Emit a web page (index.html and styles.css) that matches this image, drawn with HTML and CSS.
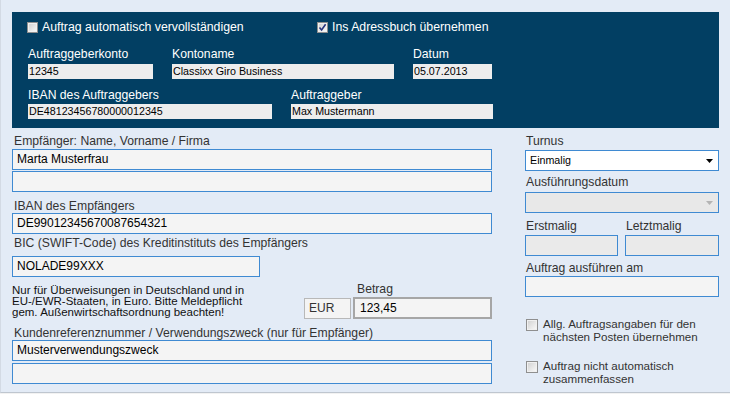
FILE: index.html
```html
<!DOCTYPE html>
<html lang="de">
<head>
    <meta charset="UTF-8">
    <title>Überweisung</title>
    <link rel="stylesheet" href="styles.css">
</head>
<body>
    <div class="window">
        <div class="sender">
            <div class="checks">
                <div class="check wide"><span class="cb"></span>Auftrag automatisch vervollständigen</div>
                <div class="check"><span class="cb checked"><svg viewBox="0 0 11 11" width="11" height="11"><path d="M2.5 5.5 L4.6 8 L8.6 2.2" fill="none" stroke="#26347e" stroke-width="1.6"/></svg></span>Ins Adressbuch übernehmen</div>
            </div>
            <div class="fields">
                <div class="field w125"><div class="cap">Auftraggeberkonto</div><div class="val">12345</div></div>
                <div class="field w222"><div class="cap">Kontoname</div><div class="val">Classixx Giro Business</div></div>
                <div class="field w79"><div class="cap">Datum</div><div class="val">05.07.2013</div></div>
            </div>
            <div class="fields second">
                <div class="field w244"><div class="cap">IBAN des Auftraggebers</div><div class="val">DE48123456780000012345</div></div>
                <div class="field w202"><div class="cap">Auftraggeber</div><div class="val">Max Mustermann</div></div>
            </div>
        </div>

        <div class="main">
            <div class="left">
                <div class="lbl">Empfänger: Name, Vorname / Firma</div>
                <div class="box mt1">Marta Musterfrau</div>
                <div class="box mt1"></div>

                <div class="lbl mt7">IBAN des Empfängers</div>
                <div class="box">DE99012345670087654321</div>

                <div class="lbl mt2">BIC (SWIFT-Code) des Kreditinstituts des Empfängers</div>
                <div class="box mt6 bic">NOLADE99XXX</div>

                <div class="amount-row">
                    <div class="notice">Nur für Überweisungen in Deutschland und in<br>EU-/EWR-Staaten, in Euro. Bitte Meldepflicht<br>gem. Außenwirtschaftsordnung beachten!</div>
                    <div class="cur">EUR</div>
                    <div class="betrag">
                        <div class="lbl">Betrag</div>
                        <div class="box amount">123,45</div>
                    </div>
                </div>

                <div class="lbl ref">Kundenreferenznummer / Verwendungszweck (nur für Empfänger)</div>
                <div class="box">Musterverwendungszweck</div>
                <div class="box mt2"></div>
            </div>

            <div class="right">
                <div class="lbl">Turnus</div>
                <div class="box select mt2">
                    <span>Einmalig</span>
                    <svg viewBox="0 0 7 4" width="7" height="4"><path d="M0 0 H7 L3.5 4 Z" fill="#000"/></svg>
                </div>

                <div class="lbl mt4">Ausführungsdatum</div>
                <div class="box select disabled mt3">
                    <span></span>
                    <svg viewBox="0 0 7 4" width="7" height="4"><path d="M0 0 H7 L3.5 4 Z" fill="#b4b4b4"/></svg>
                </div>

                <div class="pair">
                    <div class="half first"><div class="lbl">Erstmalig</div><div class="box gray mt2"></div></div>
                    <div class="half"><div class="lbl">Letztmalig</div><div class="box gray mt2"></div></div>
                </div>

                <div class="lbl mt5">Auftrag ausführen am</div>
                <div class="box mt1"></div>

                <div class="opt first"><span class="cb"></span><div class="opt-text">Allg. Auftragsangaben für den<br>nächsten Posten übernehmen</div></div>
                <div class="opt"><span class="cb"></span><div class="opt-text">Auftrag nicht automatisch<br>zusammenfassen</div></div>
            </div>
        </div>
    </div>
</body>
</html>
```

FILE: styles.css
```css
body {
    margin: 0;
    background-color: #f2f2f2;
    font-family: "Liberation Sans", Arial, sans-serif;
}
.window {
    width: 730px;
    height: 393px;
    box-sizing: border-box;
    background-color: #e3ebf6;
    border-left: 1px solid #d3dae4;
    border-bottom: 1px solid #bfc6cf;
    padding: 12px 11px 0 11px;
}

/* dark sender block */
.sender {
    height: 116px;
    box-sizing: border-box;
    background-color: #023f63;
    padding: 8px 0 0 16px;
    color: #fff;
}
.checks {
    display: flex;
    height: 15px;
    margin-left: -1px;
    font-size: 12.3px;
    line-height: 15px;
}
.check {
    display: flex;
    align-items: center;
    gap: 4px;
}
.check.wide {
    width: 290px;
}
.cb {
    display: block;
    flex: none;
    width: 11px;
    height: 11px;
    box-sizing: border-box;
    border: 1px solid #8f8f8f;
    background: linear-gradient(135deg, #cfcfcf, #fbfbfb);
    box-shadow: inset 0 0 0 1px #f0f0f0;
}
.cb svg {
    display: block;
    margin: -1px;
}
.fields {
    display: flex;
    gap: 19px;
    margin-top: 12px;
}
.fields.second {
    margin-top: 9px;
}
.cap {
    font-size: 12.2px;
    line-height: 14px;
}
.val {
    margin-top: 3px;
    height: 15px;
    background-color: #ededed;
    color: #000;
    font-size: 10.7px;
    line-height: 15px;
    padding-left: 1px;
    white-space: nowrap;
}
.second .val {
    margin-top: 2px;
}
.w125 { width: 125px; }
.w222 { width: 222px; }
.w79 { width: 79px; }
.w244 { width: 244px; }
.w202 { width: 202px; }

/* lower form */
.main {
    display: flex;
    gap: 33px;
    padding-top: 6px;
}
.left {
    width: 480px;
}
.right {
    width: 194px;
}
.lbl {
    font-size: 12.2px;
    line-height: 14px;
    color: #333;
    padding-left: 2px;
    white-space: nowrap;
}
.right .lbl {
    padding-left: 1px;
}
.box {
    height: 21px;
    box-sizing: border-box;
    border: 1px solid #3f8ad2;
    background-color: #f4f4f4;
    color: #000;
    font-size: 12px;
    line-height: 19px;
    padding-left: 4px;
    white-space: nowrap;
}
.mt1 { margin-top: 1px; }
.mt2 { margin-top: 2px; }
.mt3 { margin-top: 3px; }
.mt4 { margin-top: 4px; }
.mt5 { margin-top: 5px; }
.mt6 { margin-top: 6px; }
.mt7 { margin-top: 7px; }
.bic {
    width: 248px;
}
.amount-row {
    display: flex;
    margin-top: 5px;
}
.notice {
    width: 292px;
    padding-top: 3px;
    font-size: 11.5px;
    line-height: 11px;
    color: #111;
}
.cur {
    width: 47px;
    height: 21px;
    box-sizing: border-box;
    margin-top: 16px;
    border: 1px solid #b8b8b8;
    background-color: #f4f4f4;
    color: #333;
    font-size: 12px;
    line-height: 19px;
    padding-left: 4px;
}
.betrag {
    width: 139px;
    margin-left: 2px;
}
.betrag .lbl {
    padding-left: 4px;
}
.box.amount {
    height: 22px;
    margin-top: 1px;
    border: 2px solid #a6a6a6;
    line-height: 18px;
    padding-left: 5px;
}
.lbl.ref {
    margin-top: 7px;
}
.select {
    display: flex;
    align-items: center;
    justify-content: space-between;
    background-color: #fff;
    padding: 0 5px 0 4px;
    font-size: 10.7px;
}
.select.disabled {
    background-color: #e8e8e8;
}
.box.gray {
    background-color: #eaeaea;
}
.pair {
    display: flex;
    gap: 7px;
    margin-top: 6px;
}
.half {
    width: 94px;
}
.half.first {
    width: 93px;
}
.opt {
    display: flex;
    gap: 5px;
    margin-top: 16px;
    padding-left: 1px;
    font-size: 11.6px;
    line-height: 13px;
    color: #333;
}
.opt.first {
    margin-top: 20px;
}
.opt .cb {
    width: 12px;
    height: 12px;
    margin-top: 2px;
}
```
